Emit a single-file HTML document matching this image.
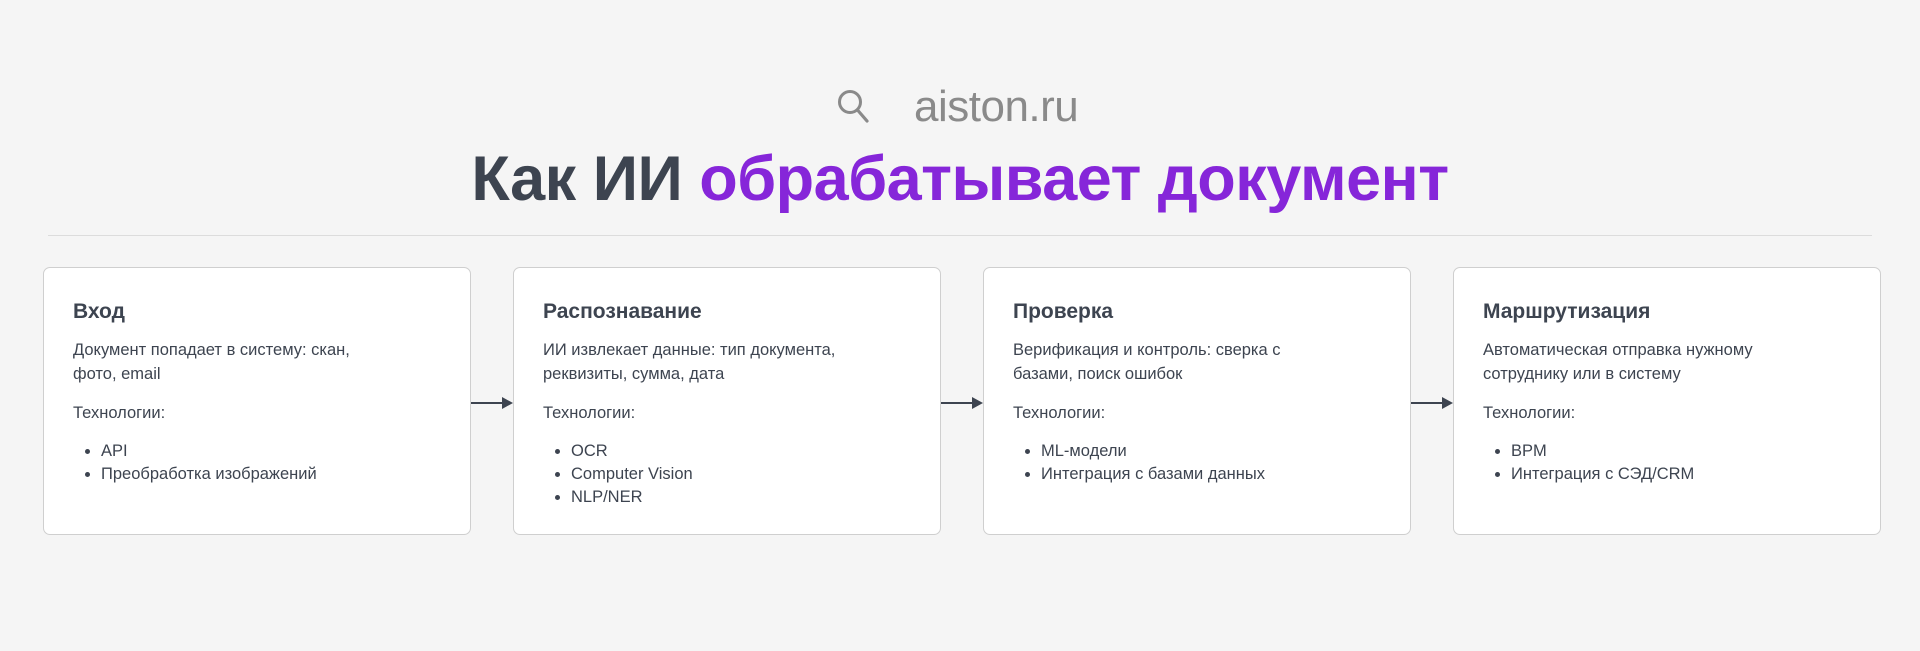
<!DOCTYPE html>
<html><head><meta charset="utf-8"><style>
*{margin:0;padding:0;box-sizing:border-box}
body{width:1920px;height:651px;background:#f5f5f5;font-family:"Liberation Sans","DejaVu Sans",sans-serif;position:relative;overflow:hidden;color:#3d4450}
.logo{position:absolute;top:82px;left:836px;display:flex;align-items:center}
.logo span{font-size:44px;color:#8a8a8a;margin-left:42px;letter-spacing:-0.5px}
h1{position:absolute;top:143px;left:0;width:1920px;text-align:center;font-size:63px;font-weight:bold;color:#3d4450;letter-spacing:-0.5px}
h1 b{color:#8626d9}
.line{position:absolute;top:235px;left:48px;width:1824px;height:1px;background:#dcdcdc}
.card{position:absolute;top:267px;width:428px;height:268px;background:#fff;border:1px solid #cfcfcf;border-radius:7px;padding:32px 29px}
.card h3{font-size:21px;font-weight:bold;margin-bottom:14px;color:#3d4450}
.card p{font-size:16.5px;line-height:24px;color:#3d4450;margin-bottom:15px}
.card ul{margin-left:28px;font-size:16.5px;line-height:23px}
</style></head><body>
<div class="logo"><svg width="36" height="38" viewBox="0 0 36 38"><circle cx="14" cy="14" r="10.5" fill="none" stroke="#8a8a8a" stroke-width="3"/><line x1="21.5" y1="22" x2="31" y2="33" stroke="#8a8a8a" stroke-width="3.2" stroke-linecap="round"/></svg><span>aiston.ru</span></div>
<h1>Как ИИ <b>обрабатывает документ</b></h1>
<div class="line"></div>
<div class="card" style="left:43px"><h3>Вход</h3><p>Документ попадает в систему: скан,<br>фото, email</p><p>Технологии:</p><ul><li>API</li><li>Преобработка изображений</li></ul></div>
<div class="card" style="left:513px"><h3>Распознавание</h3><p>ИИ извлекает данные: тип документа,<br>реквизиты, сумма, дата</p><p>Технологии:</p><ul><li>OCR</li><li>Computer Vision</li><li>NLP/NER</li></ul></div>
<div class="card" style="left:983px"><h3>Проверка</h3><p>Верификация и контроль: сверка с<br>базами, поиск ошибок</p><p>Технологии:</p><ul><li>ML-модели</li><li>Интеграция с базами данных</li></ul></div>
<div class="card" style="left:1453px"><h3>Маршрутизация</h3><p>Автоматическая отправка нужному<br>сотруднику или в систему</p><p>Технологии:</p><ul><li>BPM</li><li>Интеграция с СЭД/CRM</li></ul></div>
<svg style="position:absolute;top:396px;left:471px;width:42px;height:14px" viewBox="0 0 42 14"><line x1="0" y1="7" x2="32" y2="7" stroke="#3d4450" stroke-width="2"/><path d="M31 1 L42 7 L31 13Z" fill="#3d4450"/></svg>
<svg style="position:absolute;top:396px;left:941px;width:42px;height:14px" viewBox="0 0 42 14"><line x1="0" y1="7" x2="32" y2="7" stroke="#3d4450" stroke-width="2"/><path d="M31 1 L42 7 L31 13Z" fill="#3d4450"/></svg>
<svg style="position:absolute;top:396px;left:1411px;width:42px;height:14px" viewBox="0 0 42 14"><line x1="0" y1="7" x2="32" y2="7" stroke="#3d4450" stroke-width="2"/><path d="M31 1 L42 7 L31 13Z" fill="#3d4450"/></svg>
</body></html>
